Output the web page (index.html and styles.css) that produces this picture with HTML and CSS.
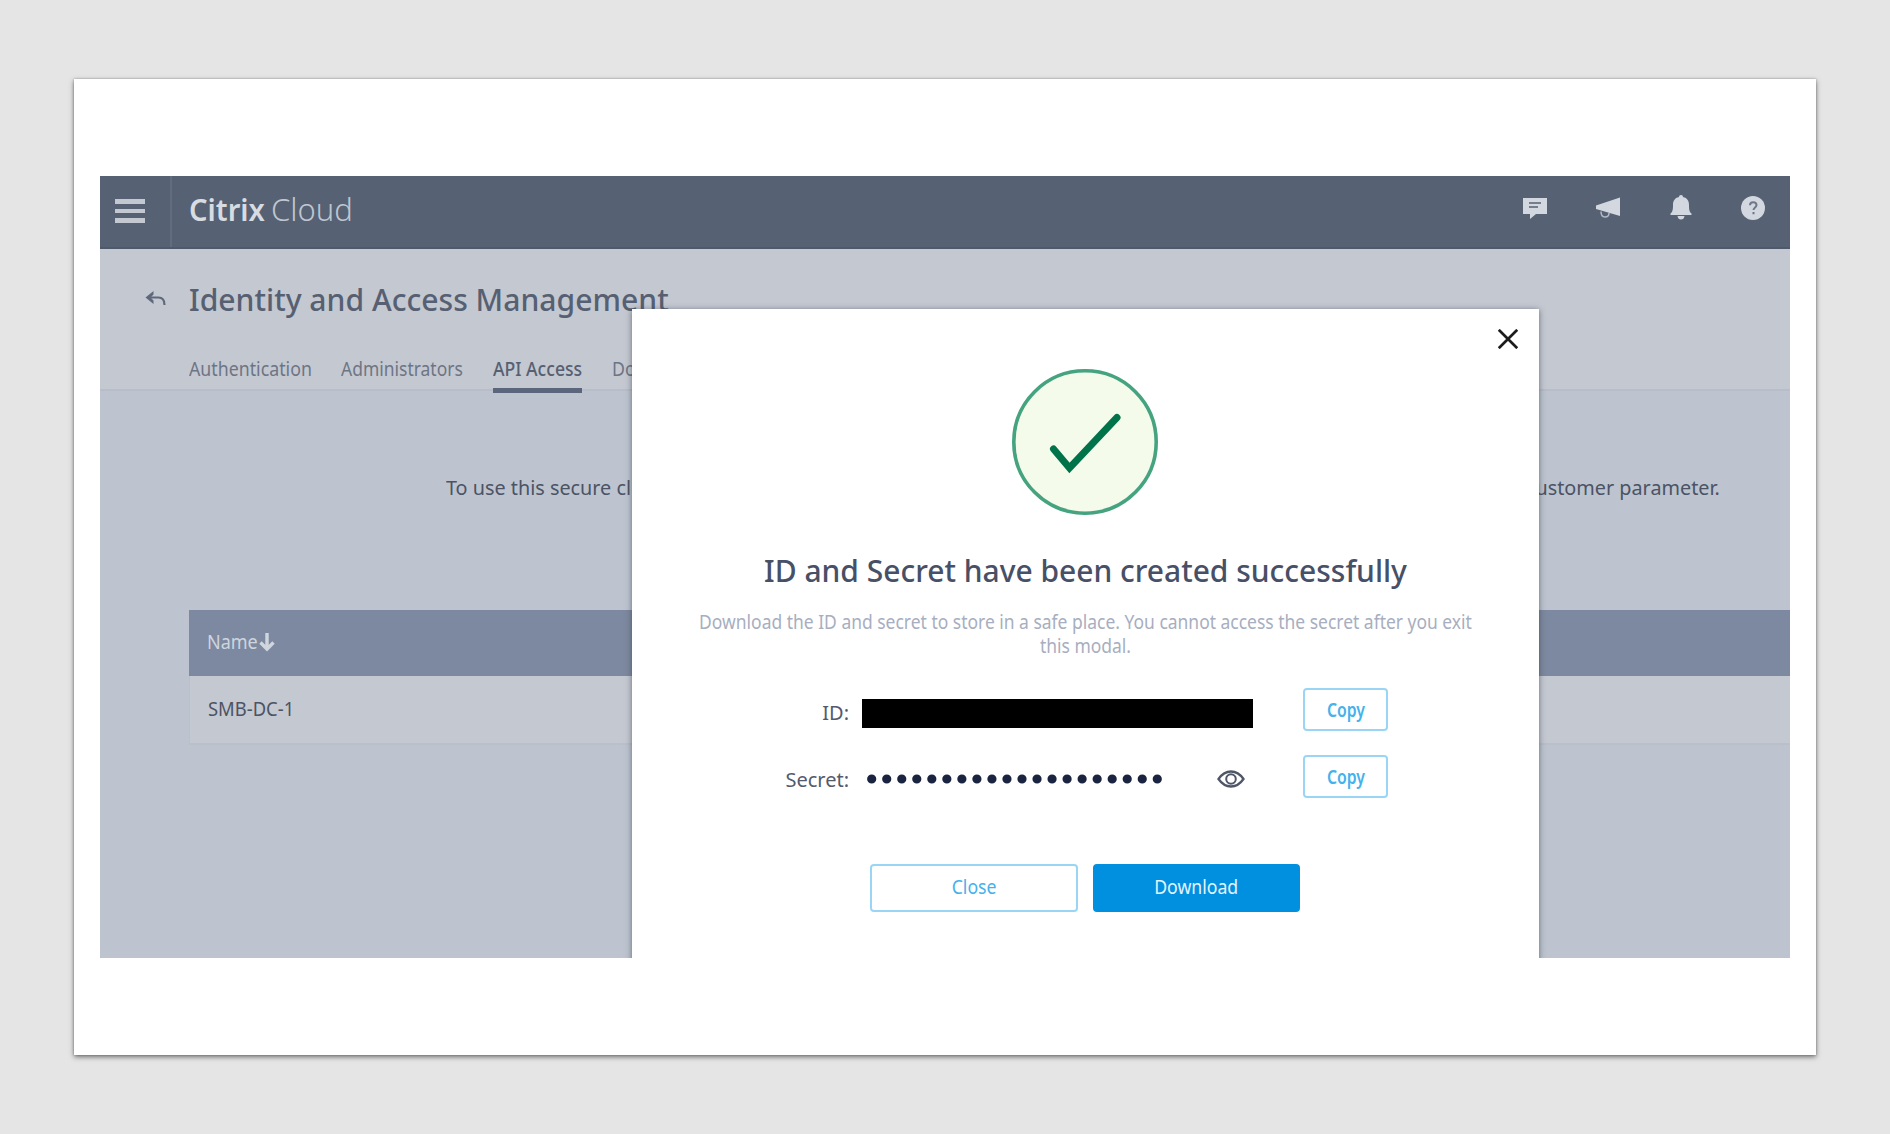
FILE: index.html
```
<!DOCTYPE html>
<html lang="en">
<head>
<meta charset="utf-8">
<title>Citrix Cloud</title>
<link rel="stylesheet" href="styles.css">
</head>
<body>
<div class="sheet">
  <div class="app">
    <header class="topbar">
      <div class="menu"><i></i><i></i><i></i></div>
      <div class="brand"><b>Citrix</b><span>Cloud</span></div>
      <nav class="tools">
        <svg width="26" height="26" viewBox="0 0 26 26"><path fill="#d3d8e0" d="M1 3h24v16H14l-6 5v-5H1z"/><path stroke="#566072" stroke-width="2" opacity=".75" d="M7 8h12M7 12h9"/></svg>
        <svg width="26" height="26" viewBox="0 0 26 26"><path fill="#d3d8e0" d="M1 10.500 25 2.500v18.500L1 14z"/><path fill="none" stroke="#b4bbc6" stroke-width="1.500" d="M6 16.500c0 3 1 5.500 4 5.500s4-1.500 4-4"/></svg>
        <svg width="24" height="26" viewBox="0 0 24 26"><path fill="#d3d8e0" d="M12 0c1.400 0 2 .8 2 2 4.500 1 6 4 6 8 0 5 .5 7 2.500 8.500V20h-21v-1.500C3.500 17 4 15 4 10c0-4 1.500-7 6-8 0-1.200.6-2 2-2zM8.500 21h7c-.4 2.500-1.500 3.500-3.500 3.500S9 23.500 8.500 21z"/></svg>
        <svg width="26" height="26" viewBox="0 0 26 26"><circle cx="13" cy="13" r="12" fill="#d3d8e0"/><path fill="none" stroke="#566072" stroke-width="2" opacity=".8" d="M10 10.200c0-2 1.300-3 3.200-3s3.300 1.100 3.300 2.900c0 2.400-3 2.500-3 5M13.500 17v2.300"/></svg>
      </nav>
    </header>
    <section class="pagehead">
      <div class="heading">
        <svg class="back" width="22" height="17" viewBox="0 0 22 17"><path fill="none" stroke="#5f697b" stroke-width="2.200" d="M2.500 6.500h11c4 0 6 2.500 6 7.500"/><path fill="#5f697b" d="M.5 6.500 8.500 0v3.500L5.500 6.500l3 3V13z"/></svg>
        <h1>Identity and Access Management</h1>
      </div>
      <div class="tabs">
        <div class="tab"><span>Authentication</span></div>
        <div class="tab"><span class="admins">Administrators</span></div>
        <div class="tab active"><span>API Access</span></div>
        <div class="tab"><span>Do</span></div>
      </div>
    </section>
    <main>
      <div class="intro"><span>To use this secure cl</span><span>customer parameter.</span></div>
      <div class="table">
        <div class="thead"><span>Name</span><svg width="16" height="19" viewBox="0 0 16 19"><path fill="none" stroke="#d0d6de" stroke-width="3.400" d="M8 0v16M1.500 9.500 8 16l6.500-6.500"/></svg></div>
        <div class="trow"><span>SMB-DC-1</span></div>
      </div>
    </main>
    <div class="modal">
      <svg class="dismiss" width="20" height="20" viewBox="0 0 20 20"><path stroke="#1c1c1c" stroke-width="2.700" d="m.8.800 18.400 18.400M19.200.8.800 19.200"/></svg>
      <svg class="success" width="148" height="148" viewBox="0 0 148 148"><circle cx="74" cy="74" r="71.200" fill="#f4fbeb" stroke="#45a37f" stroke-width="3.600"/><path fill="none" stroke="#00734a" stroke-width="7" stroke-linecap="round" d="m42.500 81 16 19L106 49.500"/></svg>
      <h2>ID and Secret have been created successfully</h2>
      <p>Download the ID and secret to store in a safe place. You cannot access the secret after you exit<br>this modal.</p>
      <div class="fields">
        <span class="label">ID:</span>
        <span class="value"><span class="redacted"></span></span>
        <button class="copy"><span>Copy</span></button>
        <span class="label">Secret:</span>
        <span class="value secret">
          <svg width="295" height="10" viewBox="0 0 295 10"><path stroke="#1a2440" stroke-width="9.200" stroke-linecap="round" stroke-dasharray="0 15.030" d="M4.700 5h286"/></svg>
          <svg class="eye" width="28" height="18" viewBox="0 0 28 18"><path fill="none" stroke="#4e5668" stroke-width="2.300" d="M1.500 9C5 4 9 1.500 14 1.500S23 4 26.500 9C23 14 19 16.500 14 16.500S5 14 1.500 9z"/><circle cx="14" cy="9" r="4.800" fill="none" stroke="#4e5668" stroke-width="2"/></svg>
        </span>
        <button class="copy"><span>Copy</span></button>
      </div>
      <div class="actions">
        <button class="close"><span>Close</span></button>
        <button class="download"><span>Download</span></button>
      </div>
    </div>
  </div>
</div>
</body>
</html>
```
FILE: styles.css
```
* { box-sizing: border-box; }
body {
  margin: 0;
  height: 1134px;
  padding: 79px 74px;
  background: #e5e5e5;
  font: 400 20px/30px "Noto Sans", "Open Sans", sans-serif;
  color: #4b5364;
  overflow: hidden;
  white-space: nowrap;
}
h1, h2, p { margin: 0; }
svg { display: block; flex: none; }
.sheet {
  height: 976px;
  padding: 97px 26px;
  background: #fff;
  box-shadow: 0 2px 5px rgba(0, 0, 0, .5), 0 0 2px rgba(0, 0, 0, .25);
}
.app {
  position: relative;
  height: 782px;
  background: #bdc4cf;
  overflow: hidden;
}

/* Narrowed lettering: each class squeezes its text horizontally */
.brand b, h1, .tab span, .intro span, .thead span, .trow span {
  display: block;
  transform-origin: left;
}

.topbar {
  display: flex;
  height: 73px;
  background: #566173;
  border-bottom: 2px solid #4f596c;
}
.menu {
  width: 72px;
  padding: 23px 0 0 15px;
  border-right: 2px solid #626c7e;
  display: flex;
  flex-direction: column;
  gap: 5px;
}
.menu i { width: 30px; height: 4.500px; background: #c3c8d1; }
.brand {
  display: flex;
  padding: 13px 0 0 17px;
  font-size: 31px;
  line-height: 40px;
}
.brand b { width: 82px; font-weight: 600; color: #d7dbe2; transform: scaleX(.94); }
.brand span { font-weight: 300; color: #bfc6d0; }
.tools {
  margin-left: auto;
  display: flex;
  gap: 47.500px;
  padding: 19px 24px 0 0;
}

.pagehead {
  height: 142px;
  padding-top: 30px;
  background: #c4c8d1;
  border-bottom: 2px solid #b7bdc9;
}
.heading { display: flex; padding-left: 45px; height: 40px; }
.back { margin: 12px 21.500px 0 0; }
h1 {
  font-size: 31px;
  line-height: 40px;
  font-weight: 500;
  color: #566072;
  transform: scaleX(.971);
}
.tabs { display: flex; padding: 35px 0 0 89px; color: #6d7585; }
.tab { width: 152px; height: 39px; }
.tab span { transform: scaleX(.888); }
.tab .admins { transform: scaleX(.873); }
.tabs .active {
  width: 89px;
  margin-right: 30px;
  font-weight: 500;
  color: #566072;
  border-bottom: 5px solid #5b657b;
}
.active span { transform: scaleX(.88); }

main { padding: 82px 0 0 89px; }
.intro {
  display: flex;
  justify-content: space-between;
  padding: 0 70px 0 257px;
}
.intro span { transform: scaleX(.99); }
.intro span:last-child { transform-origin: right; }
.table { margin-top: 107px; }
.thead {
  display: flex;
  height: 66px;
  padding: 17px 0 0 18px;
  background: #7d89a0;
  color: #cfd5de;
}
.thead span { width: 52px; transform: scaleX(.9); }
.thead svg { margin: 6px 0 0; }
.trow {
  height: 69px;
  padding: 18px 0 0 18px;
  background: #c4c8d1;
  border: solid #babfca;
  border-width: 0 0 2px 1px;
}
.trow span { transform: scaleX(.92); }

.modal {
  position: absolute;
  left: 532px;
  top: 132.500px;
  width: 907px;
  height: 670px;
  padding-top: 59.500px;
  background: #fff;
  box-shadow: 0 1px 6px rgba(50, 60, 70, .65);
  text-align: center;
}
.dismiss { position: absolute; right: 21px; top: 20px; }
.success { margin: 0 0 0 379px; }
h2 {
  margin-top: 34px;
  font-size: 31px;
  line-height: 40px;
  font-weight: 500;
  color: #475066;
  transform: scaleX(.967);
}
p {
  margin-top: 20px;
  line-height: 23.500px;
  color: #a7aec0;
  transform: scaleX(.873);
}
.fields {
  display: grid;
  grid-template-columns: 217px 442px 85px;
  grid-auto-rows: 43px;
  row-gap: 24px;
  margin-top: 31px;
}
.label { padding-top: 10px; text-align: right; color: #535a6d; }
.value { padding: 11px 0 0 13px; }
.redacted { display: block; width: 390.500px; height: 28.500px; background: #000; }
.secret { display: flex; align-items: center; padding: 5px 0 0 18px; }
.eye { margin-left: 55px; }
button {
  padding: 0;
  border: 2px solid #9ad5f6;
  border-radius: 4px;
  background: #fff;
  font: 400 19px/30px "Noto Sans", "Open Sans", sans-serif;
  color: #46b1ec;
}
button span { display: inline-block; transform: scaleX(.93); }
.copy { width: 85px; margin-left: 12px; font-weight: 600; }
.copy span { transform: scaleX(.83); }
.actions { display: flex; gap: 15px; margin: 66px 0 0 238px; }
.actions button { width: 208px; height: 48px; padding-bottom: 2px; }
.actions .download { width: 207px; background: #0090df; border-color: #0090df; color: #e4f4ff; }
```
